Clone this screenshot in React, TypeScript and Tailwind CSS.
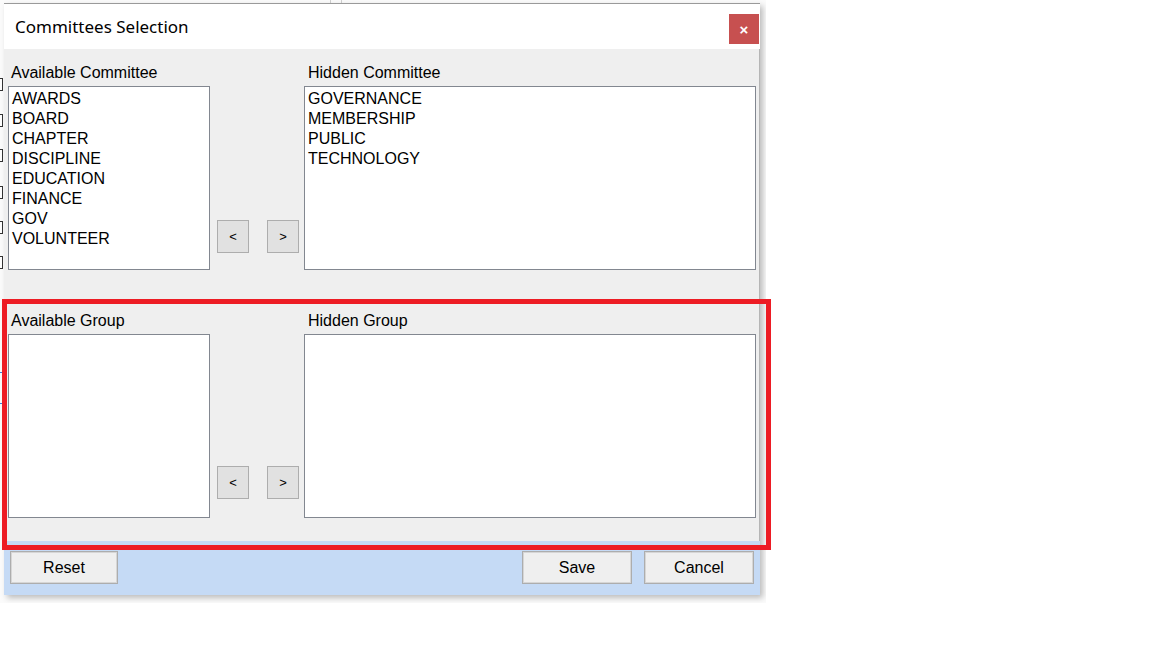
import React from "react";

const committeesAvail = ["AWARDS", "BOARD", "CHAPTER", "DISCIPLINE", "EDUCATION", "FINANCE", "GOV", "VOLUNTEER"];
const committeesHidden = ["GOVERNANCE", "MEMBERSHIP", "PUBLIC", "TECHNOLOGY"];

function ListBox({ items, wide }: { items: string[]; wide?: boolean }) {
  return (
    <div
      className={`${wide ? "w-[452px]" : "w-[202px]"} h-[184px] bg-white border border-[#828790] pt-[2px] pl-[3px] overflow-hidden`}
    >
      {items.map((it) => (
        <div key={it} className="h-[20px] leading-[20px] text-[16px] text-black">
          {it}
        </div>
      ))}
    </div>
  );
}

function ArrowBtn({ label }: { label: string }) {
  return (
    <button className="w-[32px] h-[33px] bg-[#e1e1e1] border border-[#adadad] text-[13px] leading-none text-black flex items-center justify-center">
      {label}
    </button>
  );
}

function Section({
  leftLabel,
  rightLabel,
  left,
  right,
  btnMb,
}: {
  leftLabel: string;
  rightLabel: string;
  left: string[];
  right: string[];
  btnMb: string;
}) {
  return (
    <div className="flex flex-col">
      <div className="flex h-[20px] leading-[20px] text-[16px] text-black">
        <div className="w-[202px] pl-[3px]">{leftLabel}</div>
        <div className="ml-[98px]">{rightLabel}</div>
      </div>
      <div className="flex mt-[3px]">
        <ListBox items={left} />
        <div className={`flex items-end gap-[18px] ml-[7px] mr-[5px] ${btnMb}`}>
          <ArrowBtn label="<" />
          <ArrowBtn label=">" />
        </div>
        <ListBox items={right} wide />
      </div>
    </div>
  );
}

function FooterBtn({ label, w }: { label: string; w: string }) {
  return (
    <button
      className={`${w} h-[33px] bg-[#efefef] border border-[#adadad] shadow-[inset_0_0_0_1px_#d6d6d6] text-[16px] text-black`}
    >
      {label}
    </button>
  );
}

export default function App() {
  const checkY = [78, 114, 149, 186, 221, 256];
  return (
    <div
      className="w-[1152px] h-[648px] bg-white relative"
      style={{ fontFamily: '"Liberation Sans", Arial, sans-serif' }}
    >
      {/* background page */}
      <div className="w-[766px] h-[603px] bg-[#fbfbfb] relative overflow-hidden">
        <div className="absolute left-[330px] top-0 w-px h-[4px] bg-[#d0d0d0]" />
        <div className="absolute left-[341px] top-0 w-px h-[4px] bg-[#d0d0d0]" />
        {checkY.map((y) => (
          <div
            key={y}
            className="absolute left-[-10px] w-[13px] h-[13px] border border-[#333] bg-white"
            style={{ top: y }}
          />
        ))}
        <div className="absolute left-0 top-[372px] w-[4px] h-px bg-[#3b7ddd]" />
        <div className="absolute left-0 top-[403px] w-[4px] h-px bg-[#3b7ddd]" />

        {/* dialog */}
        <div className="absolute left-[4px] top-[3px] w-[756px] h-[592px] flex flex-col border-t border-[#9a9a9a] shadow-[3px_3px_6px_rgba(0,0,0,0.25)]">
          {/* title bar */}
          <div className="h-[45px] bg-white flex items-start justify-between shrink-0">
            <div
              className="pl-[11px] pt-[11px] text-[17px] leading-[24px] text-black"
              style={{ fontFamily: '"Noto Sans", "Open Sans", sans-serif' }}
            >
              Committees Selection
            </div>
            <button className="mt-[10px] mr-[1px] w-[30px] h-[30px] bg-[#c75050] text-white text-[15px] font-bold flex items-center justify-center leading-none">
              ×
            </button>
          </div>
          {/* body */}
          <div className="flex-1 bg-[#efefef] pl-[4px] pt-[14px] flex flex-col gap-[41px] border-r border-[#b5b5b5]">
            <Section
              leftLabel="Available Committee"
              rightLabel="Hidden Committee"
              left={committeesAvail}
              right={committeesHidden}
              btnMb="mb-[17px]"
            />
            <Section
              leftLabel="Available Group"
              rightLabel="Hidden Group"
              left={[]}
              right={[]}
              btnMb="mb-[19px]"
            />
          </div>
          {/* footer */}
          <div className="h-[54px] bg-[#c5daf5] shrink-0 flex items-start justify-between px-[6px] pt-[10px]">
            <FooterBtn label="Reset" w="w-[108px]" />
            <div className="flex gap-[12px]">
              <FooterBtn label="Save" w="w-[110px]" />
              <FooterBtn label="Cancel" w="w-[110px]" />
            </div>
          </div>
        </div>
      </div>

      {/* red annotation */}
      <div className="absolute left-[2px] top-[299px] w-[769px] h-[251px] border-[5px] border-[#ed1c24] pointer-events-none" />
    </div>
  );
}
